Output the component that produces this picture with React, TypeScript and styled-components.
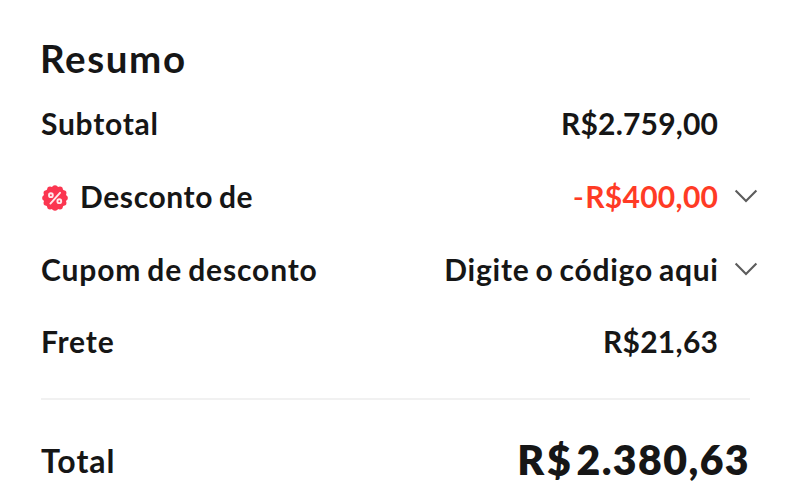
import React from "react";
import styled, { createGlobalStyle } from "styled-components";

const GlobalStyle = createGlobalStyle`
  * { box-sizing: border-box; }
  body { margin: 0; background: #fff; }
`;

const Summary = styled.section`
  display: flex;
  flex-direction: column;
  width: 795px;
  height: 500px;
  padding: 29px 38px 0 41px;
  overflow: hidden;
  background: #fff;
  color: #161616;
  font-family: Lato, "Open Sans", sans-serif;
  font-size: 30px;
  font-weight: 700;
  font-kerning: normal;
`;

const Title = styled.h1`
  display: flex;
  align-items: center;
  flex: none;
  height: 58px;
  margin: 0 0 0 -1px;
  font-size: 38.5px;
  font-weight: 700;
  letter-spacing: 1.6px;
`;

const Row = styled.div`
  display: grid;
  grid-template-columns: 1fr auto 23px;
  align-items: center;
  column-gap: 16px;
  flex: none;
  height: 72.7px;
  white-space: nowrap;
  word-spacing: -2px;
`;

const Label = styled.div<{ $spacing: number }>`
  display: flex;
  align-items: center;
  gap: 11px;
  letter-spacing: ${({ $spacing }) => $spacing}px;
`;

const Value = styled.div<{ $spacing: number; $sale?: boolean }>`
  margin-right: ${({ $spacing }) => -$spacing}px;
  letter-spacing: ${({ $spacing }) => $spacing}px;
  color: ${({ $sale }) => ($sale ? "#ff3b25" : "inherit")};
`;

const Sign = styled.span`
  margin-right: 1px;
  font-weight: 500;
`;

const Divider = styled.hr`
  flex: none;
  width: 709px;
  height: 2px;
  margin: 20px 0 0;
  border: 0;
  background: #f1f1f1;
`;

const TotalRow = styled.div`
  display: flex;
  align-items: center;
  justify-content: space-between;
  flex: none;
  width: 709px;
  height: 119px;
`;

const TotalLabel = styled.span`
  padding-top: 2px;
  font-size: 32px;
  letter-spacing: 1px;
`;

const TotalValue = styled.strong`
  display: flex;
  gap: 3px;
  font-size: 41px;
  font-weight: 800;
  letter-spacing: 1.4px;
`;

const Currency = styled.span`
  letter-spacing: 2.8px;
`;

const BadgeIcon = styled.svg`
  flex: none;
  width: 28px;
  height: 28px;
  margin-top: 4px;
`;

const ChevronIcon = styled.svg`
  width: 24px;
  height: 16px;
`;

const DiscountBadge = () => (
  <BadgeIcon viewBox="0 0 28 28" aria-hidden="true">
    <g fill="#fb3650">
      <circle cx="14" cy="14" r="11.5" />
      {Array.from({ length: 12 }, (_, i) => {
        const angle = (i * Math.PI) / 6;
        return (
          <circle
            key={i}
            cx={14 + 10 * Math.cos(angle)}
            cy={14 + 10 * Math.sin(angle)}
            r="2.8"
          />
        );
      })}
    </g>
    <g fill="none" stroke="#ffe9ec" strokeWidth="1.9" strokeLinecap="round">
      <path d="M19 8.8 9.4 19.6" />
      <circle cx="9.9" cy="11.2" r="1.9" />
      <circle cx="18.3" cy="17.2" r="1.9" />
    </g>
  </BadgeIcon>
);

const Chevron = () => (
  <ChevronIcon viewBox="0 0 24 16" aria-hidden="true">
    <path d="M1.6 2.4 12 12.9 22.4 2.4" fill="none" stroke="#5c5c5c" strokeWidth="2.1" />
  </ChevronIcon>
);

export default function App() {
  return (
    <>
      <GlobalStyle />
      <Summary>
        <Title>Resumo</Title>
        <Row>
          <Label $spacing={0.75}>Subtotal</Label>
          <Value $spacing={0.2}>R$2.759,00</Value>
        </Row>
        <Row>
          <Label $spacing={0.6}>
            <DiscountBadge />
            <span>Desconto de</span>
          </Label>
          <Value $spacing={0.3} $sale><Sign>-</Sign>R$400,00</Value>
          <Chevron />
        </Row>
        <Row>
          <Label $spacing={0.85}>Cupom de desconto</Label>
          <Value $spacing={0.75}>Digite o código aqui</Value>
          <Chevron />
        </Row>
        <Row>
          <Label $spacing={0.8}>Frete</Label>
          <Value $spacing={0.3}>R$21,63</Value>
        </Row>
        <Divider />
        <TotalRow>
          <TotalLabel>Total</TotalLabel>
          <TotalValue>
            <Currency>R$</Currency>
            <span>2.380,63</span>
          </TotalValue>
        </TotalRow>
      </Summary>
    </>
  );
}
